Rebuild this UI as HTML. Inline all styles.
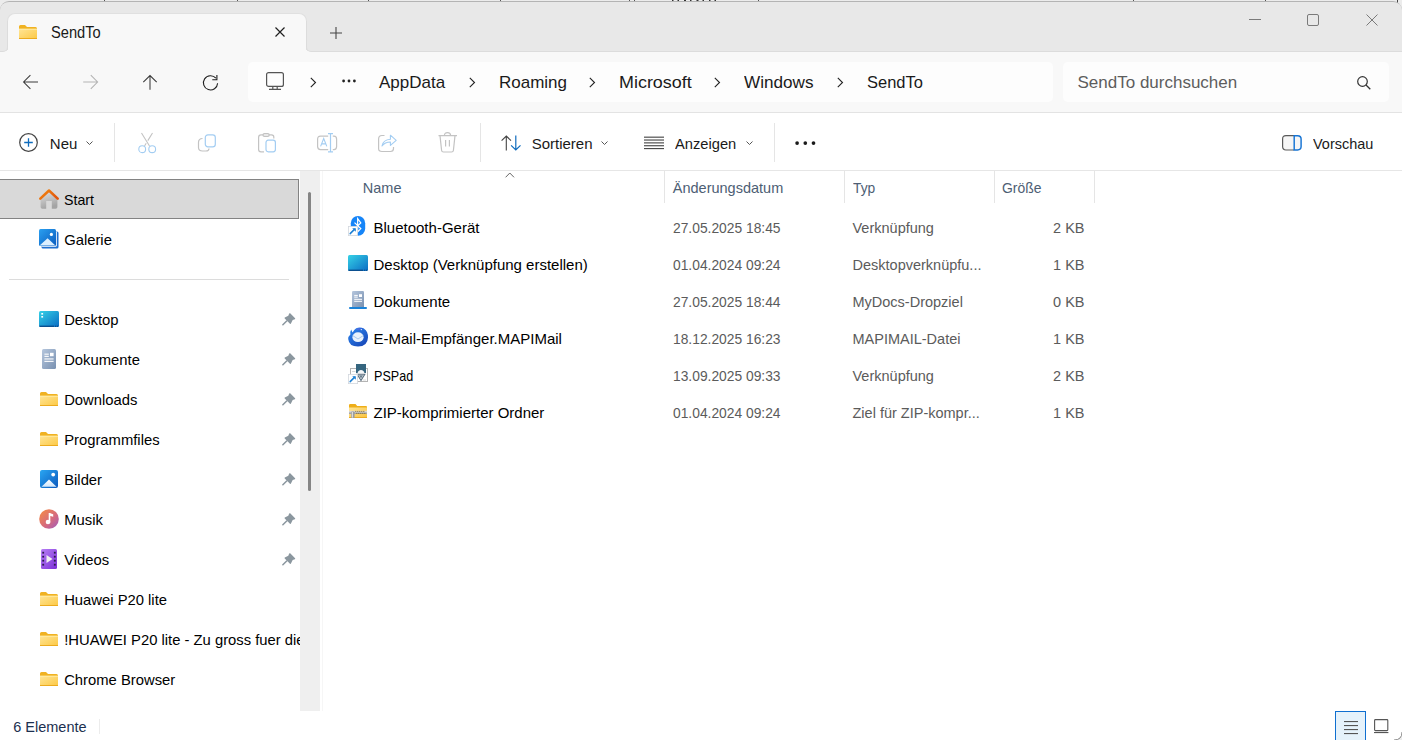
<!DOCTYPE html>
<html><head><meta charset="utf-8">
<style>
*{margin:0;padding:0;box-sizing:border-box}
html,body{width:1402px;height:740px;overflow:hidden;background:#fff;font-family:"Liberation Sans",sans-serif}
body{position:relative}
.a{position:absolute}
.t{position:absolute;white-space:nowrap;line-height:1}
svg{position:absolute;overflow:visible}
</style></head><body>
<div class="a" style="left:0px;top:0px;width:1402px;height:12px;background:#ececec"></div>
<div class="a" style="left:104px;top:0px;width:1px;height:2px;background:#555"></div>
<div class="a" style="left:237px;top:0px;width:1px;height:2px;background:#555"></div>
<div class="a" style="left:368px;top:0px;width:1px;height:2px;background:#555"></div>
<div class="a" style="left:500px;top:0px;width:1px;height:2px;background:#555"></div>
<div class="a" style="left:629px;top:0px;width:1px;height:2px;background:#555"></div>
<div class="a" style="left:634px;top:0px;width:1px;height:2px;background:#555"></div>
<div class="a" style="left:758px;top:0px;width:1px;height:2px;background:#555"></div>
<div class="a" style="left:1133px;top:0px;width:1px;height:2px;background:#555"></div>
<div class="a" style="left:1265px;top:0px;width:1px;height:2px;background:#555"></div>
<div class="a" style="left:1397px;top:0px;width:1px;height:3px;background:#444"></div>
<svg style="left:672px;top:0px" width="48" height="2" viewBox="0 0 48 2"><path d="M0 0.8 H48" stroke="#333" stroke-width="1.4" stroke-dasharray="1.5 4 1.5 5 2 4 1.5 5 2 4 1.5 5 1.5 4"/></svg>
<div class="a" style="left:0px;top:1px;width:1402px;height:52px;background:#e8e8e8;border-top:1px solid #b4b4b4;border-radius:9px 9px 0 0"></div>
<div class="a" style="left:0px;top:40px;width:1402px;height:12px;background:#f8f8f8"></div>
<div class="a" style="left:7px;top:13px;width:300px;height:37px;background:#f8f8f8;border:1px solid #e0e0e0;border-bottom:none;border-radius:8px 8px 0 0"></div>
<div class="a" style="left:0px;top:21px;width:8px;height:31px;background:#e8e8e8;border-right:1px solid #dcdcdc;border-bottom:1px solid #dcdcdc;border-bottom-right-radius:5px"></div>
<div class="a" style="left:306px;top:21px;width:1096px;height:31px;background:#e8e8e8;border-left:1px solid #dcdcdc;border-bottom:1px solid #dcdcdc;border-bottom-left-radius:5px"></div>
<svg style="left:19px;top:25px" width="18" height="14" viewBox="0 0 18 14"><defs><linearGradient id="fgt" x1="0" y1="0" x2="1" y2="1"><stop offset="0" stop-color="#ffe596"/><stop offset="1" stop-color="#fcc844"/></linearGradient></defs>
<path d="M0 1.5 Q0 0 1.5 0 L6 0 L8 2 L16.5 2 Q18 2 18 3.5 L18 13 Q18 14 17 14 L1 14 Q0 14 0 13Z" fill="#f0b222"/>
<path d="M0 3.8 L18 3.8 L18 13 Q18 14 17 14 L1 14 Q0 14 0 13Z" fill="url(#fgt)"/>
<rect x="0" y="3.8" width="18" height="0.8" fill="#ffeeb0"/>
<rect x="0" y="13.1" width="18" height="0.9" fill="#eaa618"/></svg>
<div class="t" style="left:51px;top:24.79px;font-size:15.6px;color:#1a1a1a;transform:scaleX(0.94);transform-origin:0 0;">SendTo</div>
<svg style="left:275px;top:27px" width="10" height="10" viewBox="0 0 10 10"><path d="M0.5 0.5 L9.5 9.5 M9.5 0.5 L0.5 9.5" stroke="#1f1f1f" stroke-width="1.2"/></svg>
<svg style="left:330px;top:27px" width="12" height="12" viewBox="0 0 12 12"><path d="M6 0 V12 M0 6 H12" stroke="#454545" stroke-width="1.1"/></svg>
<div class="a" style="left:1249px;top:19px;width:12px;height:1px;background:#7a7a7a"></div>
<div class="a" style="left:1307px;top:14px;width:12px;height:12px;border:1px solid #7a7a7a;border-radius:2px"></div>
<svg style="left:1366px;top:14px" width="12" height="12" viewBox="0 0 12 12"><path d="M0.5 0.5 L11.5 11.5 M11.5 0.5 L0.5 11.5" stroke="#7a7a7a" stroke-width="1"/></svg>
<div class="a" style="left:0px;top:52px;width:1402px;height:60px;background:#f8f8f8"></div>
<div class="a" style="left:0px;top:112px;width:1402px;height:1px;background:#e3e3e3"></div>
<svg style="left:23px;top:75px" width="16" height="15" viewBox="0 0 16 15"><path d="M15 7 H0.6 M7.4 0.2 L0.6 7 L7.4 13.8" stroke="#3a3a3a" stroke-width="1.05" fill="none"/></svg>
<svg style="left:83px;top:75px" width="16" height="15" viewBox="0 0 16 15"><path d="M0.2 7 H14.6 M7.8 0.2 L14.6 7 L7.8 13.8" stroke="#b3b3b3" stroke-width="1.05" fill="none"/></svg>
<svg style="left:143px;top:75px" width="15" height="15" viewBox="0 0 15 15"><path d="M7 14.8 V0.6 M0.3 7.2 L7 0.6 L13.7 7.2" stroke="#3a3a3a" stroke-width="1.05" fill="none"/></svg>
<svg style="left:203px;top:75px" width="16" height="16" viewBox="0 0 16 16"><path d="M12.9 3.2 A7.1 7.1 0 1 0 14.6 8.2" stroke="#1e1e1e" stroke-width="1.1" fill="none"/><path d="M13.9 0 V4.7 H9.3" stroke="#1e1e1e" stroke-width="1.1" fill="none"/></svg>
<div class="a" style="left:248px;top:62px;width:805px;height:40px;background:#fdfdfd;border-radius:5px"></div>
<svg style="left:266px;top:72px" width="18" height="18" viewBox="0 0 18 18"><rect x="0.6" y="0.6" width="16.8" height="13.8" rx="2" stroke="#555" stroke-width="1.2" fill="none"/><path d="M6.8 14.5 V17 M11.2 14.5 V17 M3 17.4 H15" stroke="#555" stroke-width="1.2" fill="none"/></svg>
<svg style="left:310px;top:77px" width="7" height="11" viewBox="0 0 7 11"><path d="M0.8 0.8 L5.5 5.5 L0.8 10.2" stroke="#222" stroke-width="1.1" fill="none"/></svg>
<svg style="left:469px;top:77px" width="7" height="11" viewBox="0 0 7 11"><path d="M0.8 0.8 L5.5 5.5 L0.8 10.2" stroke="#222" stroke-width="1.1" fill="none"/></svg>
<svg style="left:589px;top:77px" width="7" height="11" viewBox="0 0 7 11"><path d="M0.8 0.8 L5.5 5.5 L0.8 10.2" stroke="#222" stroke-width="1.1" fill="none"/></svg>
<svg style="left:714px;top:77px" width="7" height="11" viewBox="0 0 7 11"><path d="M0.8 0.8 L5.5 5.5 L0.8 10.2" stroke="#222" stroke-width="1.1" fill="none"/></svg>
<svg style="left:837px;top:77px" width="7" height="11" viewBox="0 0 7 11"><path d="M0.8 0.8 L5.5 5.5 L0.8 10.2" stroke="#222" stroke-width="1.1" fill="none"/></svg>
<svg style="left:342px;top:79px" width="14" height="4" viewBox="0 0 14 4"><circle cx="1.6" cy="2" r="1.4" fill="#222"/><circle cx="7" cy="2" r="1.4" fill="#222"/><circle cx="12.4" cy="2" r="1.4" fill="#222"/></svg>
<div class="t" style="left:379px;top:73.61px;font-size:17px;color:#1a1a1a;">AppData</div>
<div class="t" style="left:499px;top:73.61px;font-size:17px;color:#1a1a1a;">Roaming</div>
<div class="t" style="left:619px;top:73.61px;font-size:17px;color:#1a1a1a;transform:scaleX(1.055);transform-origin:0 0;">Microsoft</div>
<div class="t" style="left:743.5px;top:73.61px;font-size:17px;color:#1a1a1a;transform:scaleX(1.008);transform-origin:0 0;">Windows</div>
<div class="t" style="left:866.5px;top:73.61px;font-size:17px;color:#1a1a1a;transform:scaleX(0.97);transform-origin:0 0;">SendTo</div>
<div class="a" style="left:1063px;top:62px;width:326px;height:40px;background:#fdfdfd;border-radius:5px"></div>
<div class="t" style="left:1077.5px;top:73.61px;font-size:17px;color:#5d5d5d;">SendTo durchsuchen</div>
<svg style="left:1357px;top:76px" width="14" height="14" viewBox="0 0 14 14"><circle cx="5.5" cy="5.5" r="4.8" stroke="#333" stroke-width="1.2" fill="none"/><path d="M9 9 L13.3 13.3" stroke="#333" stroke-width="1.3"/></svg>
<div class="a" style="left:0px;top:113px;width:1402px;height:57px;background:#fff"></div>
<div class="a" style="left:0px;top:170px;width:1402px;height:1px;background:#e6e6e6"></div>
<svg style="left:19px;top:133px" width="19" height="19" viewBox="0 0 19 19"><circle cx="9.5" cy="9.5" r="8.8" stroke="#444" stroke-width="1.2" fill="none"/><path d="M9.5 5.2 V13.8 M5.2 9.5 H13.8" stroke="#0f6cbd" stroke-width="1.3"/></svg>
<div class="t" style="left:49.8px;top:136.30px;font-size:15px;color:#1a1a1a;">Neu</div>
<svg style="left:85.5px;top:141px" width="7" height="5" viewBox="0 0 7 5"><path d="M0.5 0.5 L3.5 3.5 L6.5 0.5" stroke="#555" stroke-width="1" fill="none"/></svg>
<div class="a" style="left:114px;top:123px;width:1px;height:39px;background:#e5e5e5"></div>
<svg style="left:138px;top:132px" width="20" height="22" viewBox="0 0 20 22"><path d="M3.5 1 L11.5 14 M14.5 1 L9.8 8.6 M8.2 11.2 L6.5 14" stroke="#c3c3c3" stroke-width="1.1" fill="none"/><circle cx="4.2" cy="17.2" r="3.4" stroke="#a3cdf2" stroke-width="1.1" fill="none"/><circle cx="14.2" cy="17.2" r="3.4" stroke="#a3cdf2" stroke-width="1.1" fill="none"/></svg>
<svg style="left:198px;top:133px" width="20" height="20" viewBox="0 0 20 20"><path d="M4.5 5.5 Q0.5 5.5 0.5 9.5 V14.5 Q0.5 18 4.5 18 H8 Q11 18 11 15.5" stroke="#c3c3c3" stroke-width="1.2" fill="none"/><rect x="7.3" y="1.8" width="10" height="12" rx="2.6" stroke="#a3cdf2" stroke-width="1.2" fill="none"/></svg>
<svg style="left:258px;top:133px" width="20" height="20" viewBox="0 0 20 20"><path d="M6 18.8 H3 Q0.6 18.8 0.6 16.4 V4.5 Q0.6 1.8 3 1.8 H13.5 Q15.8 1.8 15.8 4 V5.5" stroke="#c3c3c3" stroke-width="1.2" fill="none"/><rect x="5" y="0.6" width="6.2" height="2.8" rx="1.4" stroke="#c3c3c3" stroke-width="1.2" fill="#f4f4f4"/><rect x="8" y="7.2" width="9.4" height="11.6" rx="2.2" stroke="#a3cdf2" stroke-width="1.2" fill="none"/></svg>
<svg style="left:317px;top:133px" width="22" height="20" viewBox="0 0 22 20"><path d="M11.2 3.2 H3.5 Q0.6 3.2 0.6 6.2 V13.6 Q0.6 16.6 3.5 16.6 H11.2 M15.8 3.2 H17 Q19.6 3.2 19.6 6.2 V13.6 Q19.6 16.6 17 16.6 H15.8" stroke="#c3c3c3" stroke-width="1.2" fill="none"/><path d="M3.6 13.4 L6.7 5.6 L9.8 13.4 M4.7 10.9 H8.7" stroke="#a3cdf2" stroke-width="1.1" fill="none"/><path d="M13.5 0.6 V18.8 M11 0.6 H16 M11 18.8 H16" stroke="#a3cdf2" stroke-width="1.2" fill="none"/></svg>
<svg style="left:378px;top:134px" width="21" height="19" viewBox="0 0 21 19"><path d="M6.5 1.5 H4 Q0.6 1.5 0.6 5 V14.8 Q0.6 17.5 4 17.5 H12.5 Q15.5 17.5 15.5 14.5 V13" stroke="#c3c3c3" stroke-width="1.2" fill="none"/><path d="M4 12 Q5 5.8 12.4 5.2 V1.2 L18.2 6.3 L12.4 11.4 V8 Q7 8 4 12Z" stroke="#a3cdf2" stroke-width="1.1" fill="none" stroke-linejoin="round"/></svg>
<svg style="left:438px;top:132px" width="20" height="22" viewBox="0 0 20 22"><path d="M0.5 3.6 H19 M2 3.6 L3.6 18.5 Q3.8 20 5.5 20 H13.5 Q15.2 20 15.4 18.5 L17 3.6 M6.4 3.6 Q6.4 0.6 9.5 0.6 Q12.6 0.6 12.6 3.6 M7.6 8 V14.6 M11.4 8 V14.6" stroke="#c3c3c3" stroke-width="1.2" fill="none"/></svg>
<div class="a" style="left:480px;top:123px;width:1px;height:39px;background:#e5e5e5"></div>
<svg style="left:501px;top:135px" width="21" height="16" viewBox="0 0 21 16"><path d="M5.3 15.5 V1 M0.6 5.6 L5.3 1 L10 5.6" stroke="#444" stroke-width="1.1" fill="none"/><path d="M14.8 0.5 V15 M10.1 10.4 L14.8 15 L19.5 10.4" stroke="#0f6cbd" stroke-width="1.2" fill="none"/></svg>
<div class="t" style="left:531.7px;top:136.30px;font-size:15px;color:#1a1a1a;">Sortieren</div>
<svg style="left:600.5px;top:141px" width="7" height="5" viewBox="0 0 7 5"><path d="M0.5 0.5 L3.5 3.5 L6.5 0.5" stroke="#555" stroke-width="1" fill="none"/></svg>
<svg style="left:644px;top:136px" width="21" height="14" viewBox="0 0 21 14"><rect x="0" y="0.60" width="20" height="1.15" fill="#4a4a4a"/><rect x="0" y="3.45" width="20" height="1.15" fill="#4a4a4a"/><rect x="0" y="6.30" width="20" height="1.15" fill="#4a4a4a"/><rect x="0" y="9.15" width="20" height="1.15" fill="#4a4a4a"/><rect x="0" y="12.00" width="20" height="1.15" fill="#4a4a4a"/></svg>
<div class="t" style="left:674.5px;top:136.30px;font-size:15px;color:#1a1a1a;transform:scaleX(0.98);transform-origin:0 0;">Anzeigen</div>
<svg style="left:745.5px;top:141px" width="7" height="5" viewBox="0 0 7 5"><path d="M0.5 0.5 L3.5 3.5 L6.5 0.5" stroke="#555" stroke-width="1" fill="none"/></svg>
<div class="a" style="left:774px;top:123px;width:1px;height:39px;background:#e5e5e5"></div>
<svg style="left:795px;top:141px" width="21" height="4" viewBox="0 0 21 4"><circle cx="2.1" cy="2.1" r="1.85" fill="#1a1a1a"/><circle cx="10.3" cy="2.1" r="1.85" fill="#1a1a1a"/><circle cx="18.5" cy="2.1" r="1.85" fill="#1a1a1a"/></svg>
<svg style="left:1282px;top:135px" width="20" height="16" viewBox="0 0 20 16"><path d="M12 0.6 H4 Q0.6 0.6 0.6 4 V11.6 Q0.6 15 4 15 H12" stroke="#5a5a5a" stroke-width="1.2" fill="#f6f6f6"/><path d="M12.2 0.7 H15.6 Q19.1 0.7 19.1 4 V11.6 Q19.1 14.9 15.6 14.9 H12.2 Z" stroke="#1674d4" stroke-width="1.45" fill="#f6f6f6"/></svg>
<div class="t" style="left:1312.5px;top:136.30px;font-size:15px;color:#1a1a1a;transform:scaleX(0.965);transform-origin:0 0;">Vorschau</div>
<div class="a" style="left:0px;top:171px;width:300px;height:539px;background:#fff"></div>
<div class="a" style="left:0px;top:179px;width:299px;height:40px;background:#d9d9d9;border:1px solid #838383;border-left:none"></div>
<div class="a" style="left:300px;top:171px;width:20px;height:540px;background:#efefef"></div>
<div class="a" style="left:308px;top:192px;width:3px;height:299px;background:#858585;border-radius:1.5px"></div>
<div class="a" style="left:322px;top:171px;width:1px;height:540px;background:#f6f6f6"></div>
<div class="a" style="left:9px;top:279px;width:280px;height:1px;background:#dcdcdc"></div>
<svg style="left:39px;top:188px" width="20" height="21" viewBox="0 0 20 21"><defs><linearGradient id="hs" x1="0" y1="0" x2="0.3" y2="1"><stop offset="0" stop-color="#e4e4e4"/><stop offset="1" stop-color="#a4a4a4"/></linearGradient><linearGradient id="ho" x1="0" y1="0" x2="1" y2="0.6"><stop offset="0" stop-color="#f38b12"/><stop offset="1" stop-color="#e2560a"/></linearGradient></defs>
<path d="M1.6 10.5 L10 2.8 L18.4 10.5 V19 Q18.4 20.7 16.7 20.7 H12.8 V13 H7.2 V20.7 H3.3 Q1.6 20.7 1.6 19Z" fill="url(#hs)"/>
<path d="M1.3 10.6 L10 2.5 L18.7 10.6" stroke="url(#ho)" stroke-width="2.6" stroke-linecap="round" stroke-linejoin="round" fill="none"/></svg>
<svg style="left:39px;top:229px" width="21" height="21" viewBox="0 0 21 21"><defs><linearGradient id="g1" x1="0" y1="0" x2="1" y2="1"><stop offset="0" stop-color="#2aa0f0"/><stop offset="1" stop-color="#0a5bbf"/></linearGradient></defs><rect x="2.5" y="2.5" width="17" height="17" rx="1.5" fill="#1f6fcf"/><rect x="2" y="2" width="15.8" height="15.8" rx="1.5" fill="#fff"/><rect x="0" y="0" width="17" height="17" rx="1.5" fill="url(#g1)"/><path d="M0.6 16.6 L8.6 9.2 L16.4 16.6Z" fill="#dcefff"/><circle cx="12.4" cy="5.4" r="1.6" fill="#fff"/></svg>
<svg style="left:39px;top:311px" width="20" height="16" viewBox="0 0 20 16"><defs><linearGradient id="d1" x1="0" y1="0" x2="1" y2="1"><stop offset="0" stop-color="#36d2e6"/><stop offset="1" stop-color="#0a6cc4"/></linearGradient></defs>
<rect x="0" y="0" width="20" height="16" rx="1.5" fill="url(#d1)"/><rect x="0.5" y="14.6" width="14.5" height="1.4" fill="#0b4f8f"/><rect x="16" y="14.6" width="1.2" height="1.4" fill="#0b4f8f"/><rect x="18" y="14.6" width="1.2" height="1.4" fill="#0b4f8f"/><rect x="2.3" y="2" width="1.8" height="1.6" fill="#fff"/><rect x="2.3" y="5" width="1.8" height="1.6" fill="#fff"/></svg>
<svg style="left:42px;top:349px" width="14" height="20" viewBox="0 0 14 20"><defs><linearGradient id="dc1" x1="0" y1="0" x2="1" y2="1"><stop offset="0" stop-color="#b5c6dd"/><stop offset="1" stop-color="#7890b0"/></linearGradient></defs>
<rect x="0" y="0" width="14" height="20" rx="1.5" fill="url(#dc1)"/><rect x="2.4" y="4.6" width="4.4" height="1.1" fill="#fff"/><rect x="2.4" y="6.8" width="4.4" height="1.1" fill="#fff"/><rect x="8" y="3.8" width="3.6" height="3.4" fill="#fff"/><rect x="2.4" y="9.4" width="9.2" height="1.1" fill="#fff"/><rect x="2.4" y="11.8" width="9.2" height="1.1" fill="#fff"/></svg>
<svg style="left:40px;top:392px" width="18" height="14" viewBox="0 0 18 14"><defs><linearGradient id="fgf1" x1="0" y1="0" x2="1" y2="1"><stop offset="0" stop-color="#ffe596"/><stop offset="1" stop-color="#fcc844"/></linearGradient></defs>
<path d="M0 1.5 Q0 0 1.5 0 L6 0 L8 2 L16.5 2 Q18 2 18 3.5 L18 13 Q18 14 17 14 L1 14 Q0 14 0 13Z" fill="#f0b222"/>
<path d="M0 3.8 L18 3.8 L18 13 Q18 14 17 14 L1 14 Q0 14 0 13Z" fill="url(#fgf1)"/>
<rect x="0" y="3.8" width="18" height="0.8" fill="#ffeeb0"/>
<rect x="0" y="13.1" width="18" height="0.9" fill="#eaa618"/></svg>
<svg style="left:40px;top:432px" width="18" height="14" viewBox="0 0 18 14"><defs><linearGradient id="fgf2" x1="0" y1="0" x2="1" y2="1"><stop offset="0" stop-color="#ffe596"/><stop offset="1" stop-color="#fcc844"/></linearGradient></defs>
<path d="M0 1.5 Q0 0 1.5 0 L6 0 L8 2 L16.5 2 Q18 2 18 3.5 L18 13 Q18 14 17 14 L1 14 Q0 14 0 13Z" fill="#f0b222"/>
<path d="M0 3.8 L18 3.8 L18 13 Q18 14 17 14 L1 14 Q0 14 0 13Z" fill="url(#fgf2)"/>
<rect x="0" y="3.8" width="18" height="0.8" fill="#ffeeb0"/>
<rect x="0" y="13.1" width="18" height="0.9" fill="#eaa618"/></svg>
<svg style="left:40px;top:470px" width="18" height="18" viewBox="0 0 18 18"><defs><linearGradient id="g2" x1="0" y1="0" x2="1" y2="1"><stop offset="0" stop-color="#2aa6f2"/><stop offset="1" stop-color="#0a58bd"/></linearGradient><linearGradient id="g2m" x1="0" y1="0" x2="0" y2="1"><stop offset="0" stop-color="#ffffff"/><stop offset="1" stop-color="#cfe6fb"/></linearGradient></defs><rect x="0" y="0" width="18" height="18" rx="2" fill="url(#g2)"/><path d="M1.5 16.8 L9 9.6 L16.5 16.8Z" fill="url(#g2m)"/><circle cx="13.2" cy="4.6" r="1.9" fill="#fff"/></svg>
<svg style="left:39px;top:509px" width="20" height="20" viewBox="0 0 20 20"><defs><linearGradient id="mu" x1="0" y1="0.1" x2="0.9" y2="1"><stop offset="0" stop-color="#f58a45"/><stop offset="0.6" stop-color="#d46a80"/><stop offset="1" stop-color="#a35cb8"/></linearGradient></defs>
<circle cx="10" cy="10" r="9.8" fill="url(#mu)"/><rect x="9.7" y="4" width="1.6" height="9.6" fill="#fff"/><path d="M10.5 4 L14.2 5.3 V7.8 L10.5 6.8Z" fill="#fff"/><circle cx="9" cy="13" r="2.3" fill="#fff"/></svg>
<svg style="left:41px;top:549px" width="16" height="20" viewBox="0 0 16 20"><defs><linearGradient id="vd" x1="0" y1="0" x2="1" y2="1"><stop offset="0" stop-color="#b77ff5"/><stop offset="1" stop-color="#7b2fd6"/></linearGradient></defs>
<rect x="0" y="0" width="16" height="20" rx="1.5" fill="url(#vd)"/>
<rect x="1.3" y="2.8" width="1.8" height="1.8" fill="#2a1a4a"/><rect x="1.3" y="6.8" width="1.8" height="1.8" fill="#2a1a4a"/><rect x="1.3" y="10.8" width="1.8" height="1.8" fill="#2a1a4a"/><rect x="1.3" y="14.8" width="1.8" height="1.8" fill="#2a1a4a"/>
<rect x="12.9" y="2.8" width="1.8" height="1.8" fill="#2a1a4a"/><rect x="12.9" y="6.8" width="1.8" height="1.8" fill="#2a1a4a"/><rect x="12.9" y="10.8" width="1.8" height="1.8" fill="#2a1a4a"/><rect x="12.9" y="14.8" width="1.8" height="1.8" fill="#2a1a4a"/>
<path d="M5.5 6 L11.5 10 L5.5 14Z" fill="#f0f0f0"/></svg>
<svg style="left:40px;top:592px" width="18" height="14" viewBox="0 0 18 14"><defs><linearGradient id="fgf3" x1="0" y1="0" x2="1" y2="1"><stop offset="0" stop-color="#ffe596"/><stop offset="1" stop-color="#fcc844"/></linearGradient></defs>
<path d="M0 1.5 Q0 0 1.5 0 L6 0 L8 2 L16.5 2 Q18 2 18 3.5 L18 13 Q18 14 17 14 L1 14 Q0 14 0 13Z" fill="#f0b222"/>
<path d="M0 3.8 L18 3.8 L18 13 Q18 14 17 14 L1 14 Q0 14 0 13Z" fill="url(#fgf3)"/>
<rect x="0" y="3.8" width="18" height="0.8" fill="#ffeeb0"/>
<rect x="0" y="13.1" width="18" height="0.9" fill="#eaa618"/></svg>
<svg style="left:40px;top:632px" width="18" height="14" viewBox="0 0 18 14"><defs><linearGradient id="fgf4" x1="0" y1="0" x2="1" y2="1"><stop offset="0" stop-color="#ffe596"/><stop offset="1" stop-color="#fcc844"/></linearGradient></defs>
<path d="M0 1.5 Q0 0 1.5 0 L6 0 L8 2 L16.5 2 Q18 2 18 3.5 L18 13 Q18 14 17 14 L1 14 Q0 14 0 13Z" fill="#f0b222"/>
<path d="M0 3.8 L18 3.8 L18 13 Q18 14 17 14 L1 14 Q0 14 0 13Z" fill="url(#fgf4)"/>
<rect x="0" y="3.8" width="18" height="0.8" fill="#ffeeb0"/>
<rect x="0" y="13.1" width="18" height="0.9" fill="#eaa618"/></svg>
<svg style="left:40px;top:672px" width="18" height="14" viewBox="0 0 18 14"><defs><linearGradient id="fgf5" x1="0" y1="0" x2="1" y2="1"><stop offset="0" stop-color="#ffe596"/><stop offset="1" stop-color="#fcc844"/></linearGradient></defs>
<path d="M0 1.5 Q0 0 1.5 0 L6 0 L8 2 L16.5 2 Q18 2 18 3.5 L18 13 Q18 14 17 14 L1 14 Q0 14 0 13Z" fill="#f0b222"/>
<path d="M0 3.8 L18 3.8 L18 13 Q18 14 17 14 L1 14 Q0 14 0 13Z" fill="url(#fgf5)"/>
<rect x="0" y="3.8" width="18" height="0.8" fill="#ffeeb0"/>
<rect x="0" y="13.1" width="18" height="0.9" fill="#eaa618"/></svg>
<div class="a" style="left:0;top:171px;width:300px;height:539px;overflow:hidden">
<div class="t" style="left:64.2px;top:21.97px;font-size:14.8px;color:#000;transform:scaleX(0.96);transform-origin:0 0;">Start</div>
<div class="t" style="left:64.2px;top:61.97px;font-size:14.8px;color:#000;">Galerie</div>
<div class="t" style="left:64.2px;top:141.97px;font-size:14.8px;color:#000;">Desktop</div>
<div class="t" style="left:64.2px;top:181.97px;font-size:14.8px;color:#000;">Dokumente</div>
<div class="t" style="left:64.2px;top:221.97px;font-size:14.8px;color:#000;">Downloads</div>
<div class="t" style="left:64.2px;top:261.97px;font-size:14.8px;color:#000;">Programmfiles</div>
<div class="t" style="left:64.2px;top:301.97px;font-size:14.8px;color:#000;">Bilder</div>
<div class="t" style="left:64.2px;top:341.97px;font-size:14.8px;color:#000;">Musik</div>
<div class="t" style="left:64.2px;top:381.97px;font-size:14.8px;color:#000;">Videos</div>
<div class="t" style="left:64.2px;top:421.97px;font-size:14.8px;color:#000;">Huawei P20 lite</div>
<div class="t" style="left:64.2px;top:461.97px;font-size:14.8px;color:#000;">!HUAWEI P20 lite - Zu gross fuer die</div>
<div class="t" style="left:64.2px;top:501.97px;font-size:14.8px;color:#000;">Chrome Browser</div>
</div>
<svg style="left:282px;top:311.7px" width="14" height="14" viewBox="0 0 14 14"><g transform="scale(1.09)"><path d="M7.5 1.2 L12 5.7 Q12.4 6.2 11.8 6.6 L9.8 7.4 L8.2 10.6 Q7.8 11.2 7.3 10.7 L2.5 5.9 Q2 5.4 2.6 5 L5.8 3.4 L6.6 1.4 Q7 0.8 7.5 1.2Z" fill="#8b979f"/><path d="M4.3 8.2 L0.8 11.7" stroke="#8b979f" stroke-width="1.4" stroke-linecap="round"/></g></svg>
<svg style="left:282px;top:351.7px" width="14" height="14" viewBox="0 0 14 14"><g transform="scale(1.09)"><path d="M7.5 1.2 L12 5.7 Q12.4 6.2 11.8 6.6 L9.8 7.4 L8.2 10.6 Q7.8 11.2 7.3 10.7 L2.5 5.9 Q2 5.4 2.6 5 L5.8 3.4 L6.6 1.4 Q7 0.8 7.5 1.2Z" fill="#8b979f"/><path d="M4.3 8.2 L0.8 11.7" stroke="#8b979f" stroke-width="1.4" stroke-linecap="round"/></g></svg>
<svg style="left:282px;top:391.7px" width="14" height="14" viewBox="0 0 14 14"><g transform="scale(1.09)"><path d="M7.5 1.2 L12 5.7 Q12.4 6.2 11.8 6.6 L9.8 7.4 L8.2 10.6 Q7.8 11.2 7.3 10.7 L2.5 5.9 Q2 5.4 2.6 5 L5.8 3.4 L6.6 1.4 Q7 0.8 7.5 1.2Z" fill="#8b979f"/><path d="M4.3 8.2 L0.8 11.7" stroke="#8b979f" stroke-width="1.4" stroke-linecap="round"/></g></svg>
<svg style="left:282px;top:431.7px" width="14" height="14" viewBox="0 0 14 14"><g transform="scale(1.09)"><path d="M7.5 1.2 L12 5.7 Q12.4 6.2 11.8 6.6 L9.8 7.4 L8.2 10.6 Q7.8 11.2 7.3 10.7 L2.5 5.9 Q2 5.4 2.6 5 L5.8 3.4 L6.6 1.4 Q7 0.8 7.5 1.2Z" fill="#8b979f"/><path d="M4.3 8.2 L0.8 11.7" stroke="#8b979f" stroke-width="1.4" stroke-linecap="round"/></g></svg>
<svg style="left:282px;top:471.7px" width="14" height="14" viewBox="0 0 14 14"><g transform="scale(1.09)"><path d="M7.5 1.2 L12 5.7 Q12.4 6.2 11.8 6.6 L9.8 7.4 L8.2 10.6 Q7.8 11.2 7.3 10.7 L2.5 5.9 Q2 5.4 2.6 5 L5.8 3.4 L6.6 1.4 Q7 0.8 7.5 1.2Z" fill="#8b979f"/><path d="M4.3 8.2 L0.8 11.7" stroke="#8b979f" stroke-width="1.4" stroke-linecap="round"/></g></svg>
<svg style="left:282px;top:511.7px" width="14" height="14" viewBox="0 0 14 14"><g transform="scale(1.09)"><path d="M7.5 1.2 L12 5.7 Q12.4 6.2 11.8 6.6 L9.8 7.4 L8.2 10.6 Q7.8 11.2 7.3 10.7 L2.5 5.9 Q2 5.4 2.6 5 L5.8 3.4 L6.6 1.4 Q7 0.8 7.5 1.2Z" fill="#8b979f"/><path d="M4.3 8.2 L0.8 11.7" stroke="#8b979f" stroke-width="1.4" stroke-linecap="round"/></g></svg>
<svg style="left:282px;top:551.7px" width="14" height="14" viewBox="0 0 14 14"><g transform="scale(1.09)"><path d="M7.5 1.2 L12 5.7 Q12.4 6.2 11.8 6.6 L9.8 7.4 L8.2 10.6 Q7.8 11.2 7.3 10.7 L2.5 5.9 Q2 5.4 2.6 5 L5.8 3.4 L6.6 1.4 Q7 0.8 7.5 1.2Z" fill="#8b979f"/><path d="M4.3 8.2 L0.8 11.7" stroke="#8b979f" stroke-width="1.4" stroke-linecap="round"/></g></svg>
<div class="t" style="left:362.8px;top:180.73px;font-size:14.5px;color:#4d5e74;">Name</div>
<svg style="left:504.5px;top:172px" width="10" height="6" viewBox="0 0 10 6"><path d="M0.6 5.3 L4.8 1 L9 5.3" stroke="#666" stroke-width="1" fill="none"/></svg>
<div class="t" style="left:672.8px;top:180.73px;font-size:14.5px;color:#4d5e74;">Änderungsdatum</div>
<div class="t" style="left:853px;top:180.73px;font-size:14.5px;color:#4d5e74;transform:scaleX(0.95);transform-origin:0 0;">Typ</div>
<div class="t" style="left:1002.3px;top:180.73px;font-size:14.5px;color:#4d5e74;transform:scaleX(0.96);transform-origin:0 0;">Größe</div>
<div class="a" style="left:664px;top:171px;width:1px;height:32px;background:#e5e5e5"></div>
<div class="a" style="left:844px;top:171px;width:1px;height:32px;background:#e5e5e5"></div>
<div class="a" style="left:994px;top:171px;width:1px;height:32px;background:#e5e5e5"></div>
<div class="a" style="left:1094px;top:171px;width:1px;height:32px;background:#e5e5e5"></div>
<div class="t" style="left:373.5px;top:220.30px;font-size:15px;color:#000;">Bluetooth-Gerät</div>
<div class="t" style="left:672.8px;top:220.81px;font-size:14.4px;color:#5b5b5b;transform:scaleX(0.96);transform-origin:0 0;">27.05.2025 18:45</div>
<div class="t" style="left:852.5px;top:220.73px;font-size:14.5px;color:#5b5b5b;">Verknüpfung</div>
<div class="t" style="left:984px;width:100.5px;text-align:right;top:220.73px;font-size:14.5px;color:#5b5b5b">2 KB</div>
<div class="t" style="left:373.5px;top:257.30px;font-size:15px;color:#000;">Desktop (Verknüpfung erstellen)</div>
<div class="t" style="left:672.8px;top:257.81px;font-size:14.4px;color:#5b5b5b;transform:scaleX(0.96);transform-origin:0 0;">01.04.2024 09:24</div>
<div class="t" style="left:852.5px;top:257.73px;font-size:14.5px;color:#5b5b5b;">Desktopverknüpfu...</div>
<div class="t" style="left:984px;width:100.5px;text-align:right;top:257.73px;font-size:14.5px;color:#5b5b5b">1 KB</div>
<div class="t" style="left:373.5px;top:294.30px;font-size:15px;color:#000;">Dokumente</div>
<div class="t" style="left:672.8px;top:294.81px;font-size:14.4px;color:#5b5b5b;transform:scaleX(0.96);transform-origin:0 0;">27.05.2025 18:44</div>
<div class="t" style="left:852.5px;top:294.73px;font-size:14.5px;color:#5b5b5b;">MyDocs-Dropziel</div>
<div class="t" style="left:984px;width:100.5px;text-align:right;top:294.73px;font-size:14.5px;color:#5b5b5b">0 KB</div>
<div class="t" style="left:373.5px;top:331.30px;font-size:15px;color:#000;">E-Mail-Empfänger.MAPIMail</div>
<div class="t" style="left:672.8px;top:331.81px;font-size:14.4px;color:#5b5b5b;transform:scaleX(0.96);transform-origin:0 0;">18.12.2025 16:23</div>
<div class="t" style="left:852.5px;top:331.73px;font-size:14.5px;color:#5b5b5b;">MAPIMAIL-Datei</div>
<div class="t" style="left:984px;width:100.5px;text-align:right;top:331.73px;font-size:14.5px;color:#5b5b5b">1 KB</div>
<div class="t" style="left:373.5px;top:368.30px;font-size:15px;color:#000;transform:scaleX(0.84);transform-origin:0 0;">PSPad</div>
<div class="t" style="left:672.8px;top:368.81px;font-size:14.4px;color:#5b5b5b;transform:scaleX(0.96);transform-origin:0 0;">13.09.2025 09:33</div>
<div class="t" style="left:852.5px;top:368.73px;font-size:14.5px;color:#5b5b5b;">Verknüpfung</div>
<div class="t" style="left:984px;width:100.5px;text-align:right;top:368.73px;font-size:14.5px;color:#5b5b5b">2 KB</div>
<div class="t" style="left:373.5px;top:405.30px;font-size:15px;color:#000;">ZIP-komprimierter Ordner</div>
<div class="t" style="left:672.8px;top:405.81px;font-size:14.4px;color:#5b5b5b;transform:scaleX(0.96);transform-origin:0 0;">01.04.2024 09:24</div>
<div class="t" style="left:852.5px;top:405.73px;font-size:14.5px;color:#5b5b5b;">Ziel für ZIP-kompr...</div>
<div class="t" style="left:984px;width:100.5px;text-align:right;top:405.73px;font-size:14.5px;color:#5b5b5b">1 KB</div>
<svg style="left:348px;top:216px" width="18" height="20" viewBox="0 0 18 20"><rect x="2.8" y="0" width="14.4" height="19.8" rx="7.2" fill="#1685f8"/><path d="M6.5 6.6 L12.8 12.6 L9.65 15.9 V2.6 L12.8 6.9 L6.5 12.8" stroke="#fff" stroke-width="1.2" fill="none"/><g transform="translate(0,10)"><rect x="0.4" y="0.4" width="9.2" height="9.2" fill="#fff" stroke="#d3d7de" stroke-width="0.8"/><path d="M2.2 7.6 L6.4 3.4" stroke="#1b7fd4" stroke-width="1.5" fill="none" stroke-linecap="round"/><path d="M4.2 2.2 H7.8 V5.8Z" fill="#1b7fd4"/></g></svg>
<svg style="left:348px;top:255px" width="20" height="16" viewBox="0 0 20 16"><defs><linearGradient id="d2" x1="0" y1="0" x2="1" y2="1"><stop offset="0" stop-color="#36d2e6"/><stop offset="1" stop-color="#0a6cc4"/></linearGradient></defs><rect x="0" y="0" width="20" height="16" rx="1.5" fill="url(#d2)"/><rect x="0.5" y="14.6" width="14.5" height="1.4" fill="#0b4f8f"/><rect x="16" y="14.6" width="1.2" height="1.4" fill="#0b4f8f"/><rect x="18" y="14.6" width="1.2" height="1.4" fill="#0b4f8f"/></svg>
<svg style="left:349px;top:291px" width="20" height="20" viewBox="0 0 20 20"><defs><linearGradient id="dc2" x1="0" y1="0" x2="1" y2="1"><stop offset="0" stop-color="#b5c6dd"/><stop offset="1" stop-color="#7890b0"/></linearGradient></defs><rect x="3" y="0" width="12" height="16.5" rx="1.2" fill="url(#dc2)"/><rect x="5.2" y="3.9" width="3.6" height="1" fill="#fff"/><rect x="5.2" y="5.6" width="3.6" height="1" fill="#fff"/><rect x="10" y="3.2" width="3" height="2.8" fill="#fff"/><rect x="5.2" y="7.8" width="7.8" height="1" fill="#fff"/><rect x="5.2" y="9.8" width="7.8" height="1" fill="#fff"/><rect x="0" y="16" width="18" height="1.9" rx="0.9" fill="#1a82d8"/></svg>
<svg style="left:348px;top:327px" width="21" height="20" viewBox="0 0 21 20"><defs><linearGradient id="tb" x1="0" y1="0" x2="0.8" y2="1"><stop offset="0" stop-color="#2d8af2"/><stop offset="1" stop-color="#1747b8"/></linearGradient><linearGradient id="tbh" x1="0" y1="0" x2="1" y2="0"><stop offset="0" stop-color="#5b6fe0"/><stop offset="1" stop-color="#1f5fd8"/></linearGradient></defs><path d="M3.2 2.6 Q1.8 5 2.4 7.5 Q0 9.5 0.2 12 Q1 19.6 10 19.6 Q19.6 19.6 20 10.5 Q20.2 4.6 16 1.8 Q12.5 -0.4 8.2 1.2 Q5.5 3 4.6 5.6 Q3.8 4.2 3.2 2.6Z" fill="url(#tb)"/><path d="M7.8 2.2 Q11.5 -0.2 16.4 1.8 Q13 2 11 3.2Z" fill="url(#tbh)"/><circle cx="13.3" cy="2.6" r="0.6" fill="#fff"/><ellipse cx="10" cy="10.2" rx="5.6" ry="4.9" fill="#e9f2fc"/><path d="M4.8 8.6 L10 12 L15.2 8.6" stroke="#a9c9ef" stroke-width="1" fill="none"/></svg>
<svg style="left:348px;top:364px" width="21" height="20" viewBox="0 0 21 20"><rect x="2.5" y="4.5" width="17" height="13" fill="#fff" stroke="#b4b4b4" stroke-width="1"/><path d="M4 7.5 H7.5 M4 13.5 H7 M15 16 H18" stroke="#d0d0d0" stroke-width="0.8"/><rect x="8" y="0" width="10" height="9" fill="#35657f"/><path d="M9.6 9.2 Q10 6.2 13 6 Q16 6.2 16.4 9.2Z" fill="#f4f6f8"/><path d="M9.2 10.2 L13 16.5 L16.8 10.2Z" stroke="#5c7080" stroke-width="1.1" fill="#e6eaee"/><path d="M11 11.3 L13 14.5 L15 11.3Z" fill="#6a8090"/><g transform="translate(0,10)"><rect x="0.4" y="0.4" width="9.2" height="9.2" fill="#fff" stroke="#d3d7de" stroke-width="0.8"/><path d="M2.2 7.6 L6.4 3.4" stroke="#1b7fd4" stroke-width="1.5" fill="none" stroke-linecap="round"/><path d="M4.2 2.2 H7.8 V5.8Z" fill="#1b7fd4"/></g></svg>
<svg style="left:349px;top:404px" width="18" height="15" viewBox="0 0 18 15"><defs><linearGradient id="zp" x1="0" y1="0" x2="1" y2="1"><stop offset="0" stop-color="#ffe596"/><stop offset="1" stop-color="#f9c23c"/></linearGradient><linearGradient id="zs" x1="0" y1="0" x2="0" y2="1"><stop offset="0" stop-color="#e8e8e8"/><stop offset="1" stop-color="#9a9a9a"/></linearGradient></defs><path d="M0 1.2 Q0 0 1.2 0 L6.5 0 L8.2 2 L17 2 Q18 2 18 3 V13 Q18 14 17 14 H1 Q0 14 0 13Z" fill="#eeae18"/><path d="M0 3.6 H18 V13 Q18 14 17 14 H1 Q0 14 0 13Z" fill="url(#zp)"/><rect x="0" y="13.2" width="18" height="0.8" fill="#e8a418"/><rect x="0" y="6.8" width="18" height="3.2" fill="url(#zs)"/><rect x="6.3" y="6.9" width="1" height="1" fill="#8a6a18"/><rect x="7.3" y="8.9" width="1" height="1" fill="#8a6a18"/><rect x="8.3" y="6.9" width="1" height="1" fill="#8a6a18"/><rect x="9.3" y="8.9" width="1" height="1" fill="#8a6a18"/><rect x="10.3" y="6.9" width="1" height="1" fill="#8a6a18"/><rect x="11.3" y="8.9" width="1" height="1" fill="#8a6a18"/><rect x="12.3" y="6.9" width="1" height="1" fill="#8a6a18"/><rect x="13.3" y="8.9" width="1" height="1" fill="#8a6a18"/><rect x="14.3" y="6.9" width="1" height="1" fill="#8a6a18"/><rect x="15.3" y="8.9" width="1" height="1" fill="#8a6a18"/><rect x="2.2" y="7.6" width="3.4" height="6.4" rx="0.6" fill="#9c9c9c"/><rect x="2.8" y="8" width="1.2" height="5.6" fill="#dadada"/></svg>
<div class="t" style="left:13.2px;top:719.73px;font-size:14.5px;color:#1c3050;">6 Elemente</div>
<div class="a" style="left:99px;top:719px;width:1px;height:15px;background:#ececec"></div>
<div class="a" style="left:1335px;top:711px;width:31px;height:30px;background:#e5f2fb;border:1px solid #0f6fd0;border-bottom:none"></div>
<svg style="left:1344px;top:721px" width="14" height="14" viewBox="0 0 14 14"><rect x="0" y="0" width="14" height="1.1" fill="#555"/><rect x="0" y="4" width="14" height="1.1" fill="#555"/><rect x="0" y="8" width="14" height="1.1" fill="#555"/><rect x="0" y="12" width="14" height="1.1" fill="#555"/></svg>
<svg style="left:1374px;top:719px" width="16" height="15" viewBox="0 0 16 15"><rect x="0.6" y="0.6" width="13.2" height="11" rx="0.8" stroke="#555" stroke-width="1.1" fill="none"/><rect x="0" y="13" width="14.4" height="1.1" fill="#555"/></svg>
<svg style="left:1390px;top:728px" width="12" height="12" viewBox="0 0 12 12"><path d="M12 4 Q12 12 4 12 L12 12Z" fill="#ececec"/><path d="M12 4 Q12 12 4 12" stroke="#8a8a8a" stroke-width="1" fill="none"/></svg>
</body></html>
